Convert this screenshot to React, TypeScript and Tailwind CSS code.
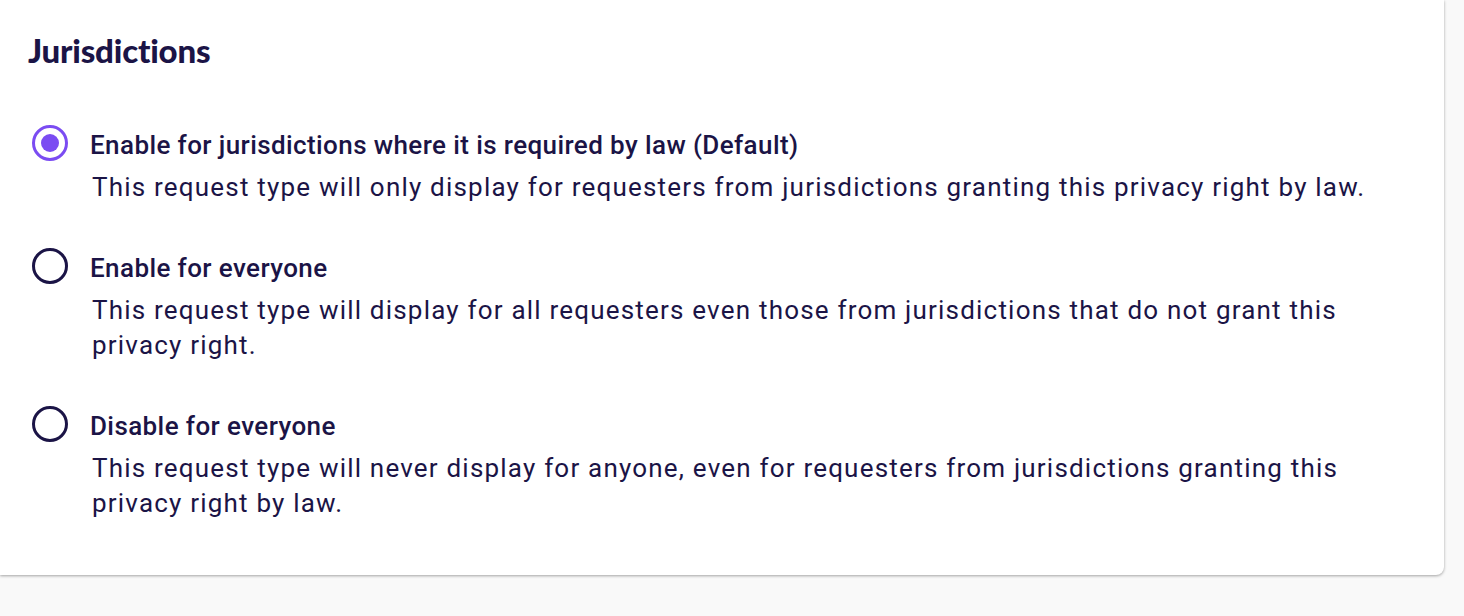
import React, { useState } from 'react';

const options = [
  {
    id: 'required',
    label: 'Enable for jurisdictions where it is required by law (Default)',
    description:
      'This request type will only display for requesters from jurisdictions granting this privacy right by law.',
  },
  {
    id: 'everyone',
    label: 'Enable for everyone',
    description:
      'This request type will display for all requesters even those from jurisdictions that do not grant this privacy right.',
  },
  {
    id: 'disabled',
    label: 'Disable for everyone',
    description:
      'This request type will never display for anyone, even for requesters from jurisdictions granting this privacy right by law.',
  },
];

function Radio({ checked }: { checked: boolean }) {
  return (
    <span
      className={
        checked
          ? 'flex h-[36px] w-[36px] shrink-0 items-center justify-center rounded-full border-[3px] border-[#7b4cf2]'
          : 'flex h-[36px] w-[36px] shrink-0 items-center justify-center rounded-full border-[3px] border-[#1b1446]'
      }
    >
      {checked && <span className="h-[18px] w-[18px] rounded-full bg-[#7b4cf2]" />}
    </span>
  );
}

export default function App() {
  const [selected, setSelected] = useState('required');

  return (
    <div className="h-[616px] w-full overflow-hidden bg-[#f9f9f9]">
      <div className="h-[575px] w-[1444px] rounded-br-lg bg-white pl-[32px] pt-[28px] text-[#1b1446] shadow-[0_1px_3px_rgba(0,0,0,0.35)]">
        <h2 className="-ml-[4px] font-['Lato',sans-serif] text-[33px] font-black leading-[44px] tracking-[-0.2px]">
          Jurisdictions
        </h2>

        <div className="mt-[57px] flex flex-col gap-[47px]">
          {options.map((opt) => (
            <label
              key={opt.id}
              className="flex cursor-pointer items-start gap-[22px]"
              onClick={() => setSelected(opt.id)}
            >
              <span className="-mt-[4px]">
                <Radio checked={selected === opt.id} />
              </span>
              <div className="flex w-[1300px] flex-col font-['Roboto',sans-serif]">
                <span className="text-[26px] font-medium leading-[32px] tracking-[0.4px]">
                  {opt.label}
                </span>
                <span className="mt-[9px] pl-[2px] text-[26px] leading-[35px] tracking-[1.2px]">
                  {opt.description}
                </span>
              </div>
            </label>
          ))}
        </div>
      </div>
    </div>
  );
}
